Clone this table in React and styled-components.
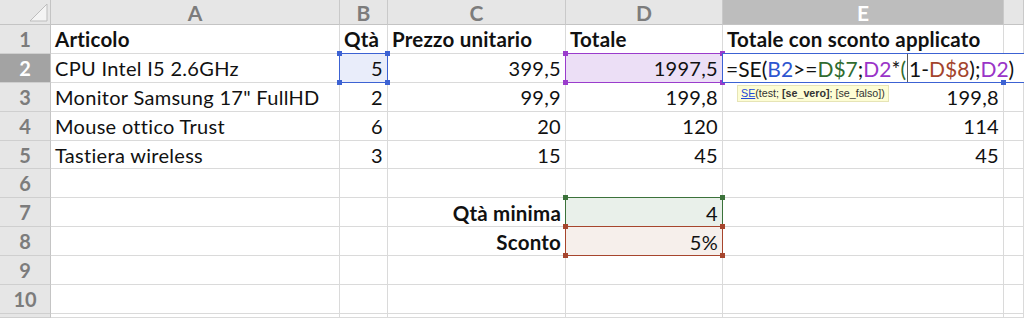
import React from 'react'
import styled, { createGlobalStyle, css } from 'styled-components'

const GlobalStyle = createGlobalStyle`
  body {
    margin: 0;
    background: #ffffff;
    font-family: Lato, "Open Sans", sans-serif;
    overflow: hidden;
  }
`

const tones = {
    blue: { fill: '#e9edfa', line: '#3c62d3' },
    purple: { fill: '#ecdff6', line: '#9a3ccc' },
    green: { fill: '#e9f0ea', line: '#3b723a' },
    red: { fill: '#f6efeb', line: '#a6452d' },
}

const Sheet = styled.div`
  display: grid;
  grid-template-columns: 51px 289px 48px 178px 157px 281px 1fr;
  grid-template-rows: 25px repeat(10, 28.9px) 1fr;
  width: 1024px;
  height: 318px;
  overflow: hidden;
`

const Corner = styled.div`
  background: #e6e6e6;
  border-right: 1px solid #c4c4c4;
  border-bottom: 1px solid #c4c4c4;
  display: flex;
  align-items: flex-end;
  justify-content: flex-end;
  padding: 0 2px 2px 0;
  box-sizing: border-box;
`

const ColHead = styled.div`
  background: ${(p) => (p.$active ? '#bdbdbd' : '#e6e6e6')};
  color: ${(p) => (p.$active ? '#ffffff' : '#7c7c7c')};
  border-right: 1px solid #c9c9c9;
  border-bottom: 1px solid #c4c4c4;
  box-sizing: border-box;
  display: flex;
  align-items: center;
  justify-content: center;
  padding-top: 1px;
  font-size: 21px;
  font-weight: 700;
`

const RowHead = styled.div`
  background: ${(p) => (p.$active ? '#a3a3a3' : '#e6e6e6')};
  color: ${(p) => (p.$active ? '#ffffff' : '#7c7c7c')};
  border-right: 1px solid #c4c4c4;
  border-bottom: 1px solid #cfcfcf;
  box-sizing: border-box;
  display: flex;
  align-items: center;
  justify-content: center;
  font-size: 20px;
  font-weight: 700;
`

const Cell = styled.div`
  position: relative;
  border-right: 1px solid #dadada;
  border-bottom: 1px solid #dadada;
  box-sizing: border-box;
  display: flex;
  align-items: center;
  justify-content: ${(p) => (p.$right ? 'flex-end' : 'flex-start')};
  padding: 1px 4px 0 4px;
  font-size: ${(p) => (p.$bold ? '20.5px' : '20px')};
  font-weight: ${(p) => (p.$bold ? 700 : 400)};
  letter-spacing: ${(p) => (p.$bold ? '0.2px' : '0.3px')};
  color: #111111;
  white-space: nowrap;
  ${(p) => p.$tone && css`
    background: ${tones[p.$tone].fill};
  `}
`

const Frame = styled.div`
  position: absolute;
  top: -1px;
  left: -1px;
  right: -1px;
  bottom: -1px;
  border: 1px solid ${(p) => tones[p.$tone].line};
  pointer-events: none;
  z-index: 2;
`

const Handle = styled.span`
  position: absolute;
  width: 5px;
  height: 5px;
  background: ${(p) => tones[p.$tone].line};
  ${(p) => (p.$pos.includes('t') ? 'top: -3px;' : 'bottom: -3px;')}
  ${(p) => (p.$pos.includes('l') ? 'left: -3px;' : 'right: -3px;')}
`

const Editor = styled.div`
  position: absolute;
  top: -1px;
  left: -1px;
  bottom: -1px;
  min-width: 100%;
  padding: 1px 14px 0 3px;
  box-sizing: border-box;
  background: #ffffff;
  border: 1px solid #3c62d3;
  display: flex;
  align-items: center;
  font-size: 21px;
  letter-spacing: 0;
  color: #111111;
  z-index: 3;
`

const Ref = styled.span`
  color: ${(p) => p.$color};
`

const Caret = styled.span`
  display: inline-block;
  width: 1px;
  height: 28px;
  background: #5a5a5a;
  margin: 0 1px;
`

const Tip = styled.div`
  position: absolute;
  top: calc(100% + 3px);
  left: 14px;
  padding: 1px 3px 2px;
  background: #fdfdd4;
  border: 1px solid #e6e4b6;
  font-family: "Liberation Sans", Arial, sans-serif;
  font-size: 10.7px;
  letter-spacing: 0;
  color: #333333;
  white-space: nowrap;
  z-index: 4;
  a {
    color: #2448d8;
    text-decoration: underline;
  }
`

const Hl = ({ tone }) => (
    <Frame $tone={tone}>
        {['tl', 'tr', 'bl', 'br'].map((pos) => (
            <Handle key={pos} $tone={tone} $pos={pos} />
        ))}
    </Frame>
)

const rows = [
    ['Articolo', 'Qtà', 'Prezzo unitario', 'Totale', 'Totale con sconto applicato'],
    ['CPU Intel I5 2.6GHz', '5', '399,5', '1997,5', ''],
    ['Monitor Samsung 17" FullHD', '2', '99,9', '199,8', '199,8'],
    ['Mouse ottico Trust', '6', '20', '120', '114'],
    ['Tastiera wireless', '3', '15', '45', '45'],
    ['', '', '', '', ''],
    ['', '', 'Qtà minima', '4', ''],
    ['', '', 'Sconto', '5%', ''],
    ['', '', '', '', ''],
    ['', '', '', '', ''],
    ['', '', '', '', ''],
]

const tonesAt = { '1-1': 'blue', '1-3': 'purple', '6-3': 'green', '7-3': 'red' }

const Formula = () => (
    <Editor>
        <span>=SE(</span>
        <Ref $color="#2d55d0">B2</Ref>
        <span>&gt;=</span>
        <Ref $color="#2f6b2f">D$7</Ref>
        <span>;</span>
        <Ref $color="#9a34c8">D2</Ref>
        <span>*</span>
        <Ref $color="#2f6b2f">(</Ref>
        <Caret />
        <span>1-</span>
        <Ref $color="#a3442c">D$8</Ref>
        <span>);</span>
        <Ref $color="#9a34c8">D2</Ref>
        <span>)</span>
    </Editor>
)

const App = () => {
    return (
        <>
            <GlobalStyle />
            <Sheet>
                <Corner>
                    <svg width="19" height="19" viewBox="0 0 19 19">
                        <path d="M18 1 L18 18 L1 18 Z" fill="#f4f4f4" stroke="#bdbdbd" strokeWidth="1" />
                    </svg>
                </Corner>
                {['A', 'B', 'C', 'D', 'E', ''].map((c) => (
                    <ColHead key={c || 'F'} $active={c === 'E'}>{c}</ColHead>
                ))}
                {rows.map((r, i) => (
                    <React.Fragment key={i}>
                        <RowHead $active={i === 1}>{i < 10 ? i + 1 : ''}</RowHead>
                        {r.map((v, j) => {
                            const tone = tonesAt[`${i}-${j}`]
                            const bold = i === 0 || (j === 2 && (i === 6 || i === 7))
                            const right = i > 0 && j > 0
                            return (
                                <Cell key={j} $tone={tone} $bold={bold} $right={right}>
                                    {v}
                                    {tone && <Hl tone={tone} />}
                                    {i === 1 && j === 4 && (
                                        <>
                                            <Formula />
                                            <Handle $tone="blue" $pos="br" style={{ zIndex: 5 }} />
                                            <Tip>
                                                <a>SE</a>(test; <b>[se_vero]</b>; [se_falso])
                                            </Tip>
                                        </>
                                    )}
                                </Cell>
                            )
                        })}
                        <Cell />
                    </React.Fragment>
                ))}
            </Sheet>
        </>
    )
}

export default App
